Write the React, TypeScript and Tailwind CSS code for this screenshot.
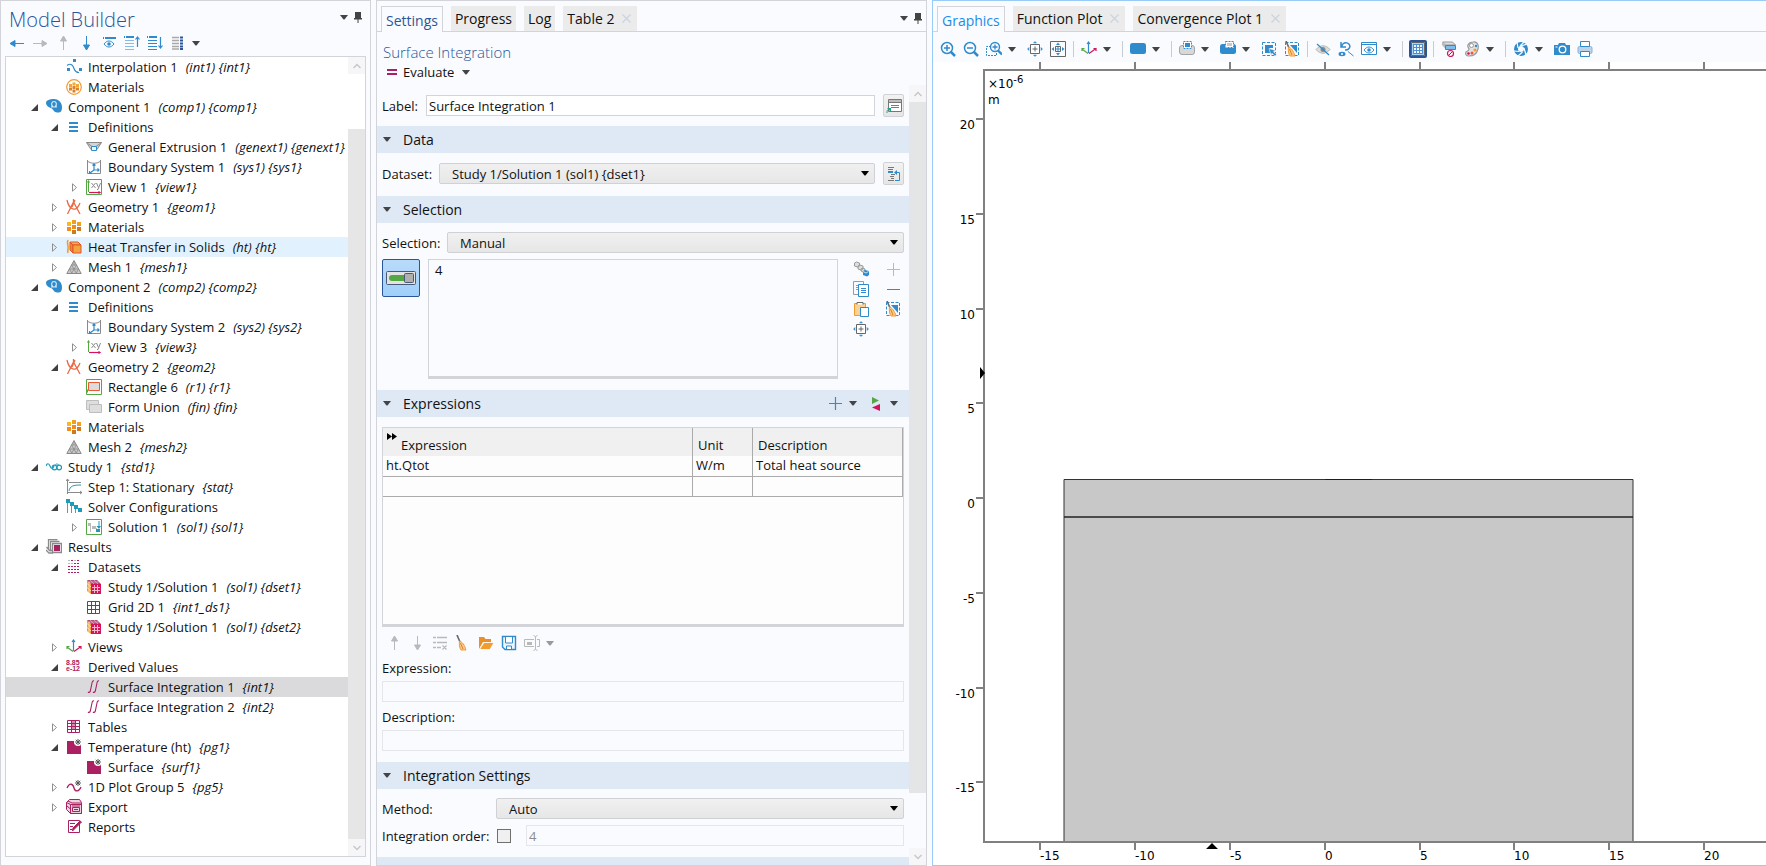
import type { ReactNode } from "react";

const BLUE = "#308bcc";
const GRAY = "#8a8a8a";
const PALE = "#b9b9b9";
const PLUM = "#ab2063";
const ORANGE = "#f29b30";
const GREEN = "#54a844";
const TEAL = "#1e9bb8";

function Svg({ children, size = 16 }: { children: ReactNode; size?: number }) {
  return (
    <svg width={size} height={size} viewBox={`0 0 ${size} ${size}`} fill="none" className="shrink-0" aria-hidden="true">
      {children}
    </svg>
  );
}

/* ---------- tree icons ---------- */

function MaterialBlocks() {
  return (
    <Svg>
      <g shapeRendering="crispEdges">
        <path d="M1 3h4v4H1z" fill="#fbb81f" />
        <path d="M6 1h4v4H6zM11 3h4v4h-4z" fill="#f0a020" />
        <path d="M1 8h4v4H1zM6 6h4v4H6z" fill="#f58a1f" />
        <path d="M11 8h4v4h-4zM6 11h4v4H6z" fill="#cf7a1c" />
      </g>
    </Svg>
  );
}

function BoundarySystem() {
  return (
    <Svg>
      <path d="M1.500 1v13.500h13V1" stroke={GRAY} />
      <path d="M1.500 2c3 3 10 3 13 0" stroke={GRAY} />
      <path d="M8 5v6h5M8 11l-4 3M6.500 6.500L8 5l1.500 1.500M11.500 9.500L13 11l-1.500 1.500M3.500 12v2.500H6" stroke={BLUE} strokeWidth="1.200" />
    </Svg>
  );
}

function ViewAxes({ framed = false }: { framed?: boolean }) {
  return (
    <Svg>
      {framed && <path d="M.5.5h15v15H.5z" stroke={GREEN} />}
      <path d="M2.500 2v11" stroke={GREEN} />
      <path d="M1.500 3.500l1-2 1 2" stroke={GREEN} />
      <path d="M3 13.500h11" stroke="#d4145a" strokeWidth="1.200" />
      <path d="M12.500 12.500l2 1-2 1" stroke="#d4145a" />
      <path d="M5.500 4l4 5M9.500 4l-4 5M10.500 4l2 4.500M14.500 4L12 10.500h-1" stroke={GRAY} />
    </Svg>
  );
}

function DatasetCube() {
  return (
    <Svg>
      <path d="M1 1l4 4v10l-4-3z" fill={ORANGE} />
      <path d="M1 1h10l4 4H5z" fill="#b04a78" />
      <path d="M5 5h10v10H5z" fill="#d4145a" />
      <path d="M8.500 6v8M11.500 6v8M6 8.500h8M6 11.500h8" stroke="#f3b6cb" />
      <path d="M3 3v10.500M1 4.500l4 3.500M1 8.500l4 3.500" stroke="#ffdca8" />
      <path d="M4 1l4 4M8 1l4 4M3 3h10" stroke="#e4b4cb" strokeWidth=".7" />
    </Svg>
  );
}

function Star({ x, y }: { x: number; y: number }) {
  return (
    <g transform={`translate(${x} ${y})`}>
      <circle r="4" fill="#fff" />
      <path d="M0-3v6M-3 0h6M-2.200-2.200l4.400 4.400M2.200-2.200l-4.400 4.400" stroke="#555" strokeWidth="1" />
    </g>
  );
}

const icons: Record<string, ReactNode> = {
  interpolation: (
    <Svg>
      <path d="M1 6.500c4-3 6 0 7 3s3 4 5 4" stroke={BLUE} strokeWidth="1.200" />
      <path d="M7 0h3v3H7zM1 9h3v3H1zM13 9h3v3h-3z" fill={BLUE} />
    </Svg>
  ),
  globalMaterials: (
    <Svg>
      <circle cx="8" cy="8" r="7.300" stroke={ORANGE} strokeWidth="1.200" />
      <path d="M3 5h3v3H3zM6.500 3.500h3v3h-3zM10 5h3v3h-3z" fill="#f0a733" />
      <path d="M3 8.500h3v3H3zM6.500 7h3v3h-3zM10 8.500h3v3h-3zM6.500 10.500h3v3h-3z" fill="#d9822b" />
    </Svg>
  ),
  component: (
    <Svg>
      <path d="M0 4C0 1 4 0 8 0s8 3 8 8-2 6-5 5.500C8 13 7.500 11 6 9.500 4 9 0 7 0 4z" fill={BLUE} />
      <path d="M5 8h2.200C4.500 6 5.500 2.500 8 2.500s3.500 3.500.8 5.500H11" stroke="#d3e8f7" strokeWidth="1.200" />
    </Svg>
  ),
  definitions: (
    <Svg>
      <path d="M3 3h9v2H3zM3 7h9v2H3zM3 11h9v2H3z" fill={BLUE} shapeRendering="crispEdges" />
    </Svg>
  ),
  extrusion: (
    <Svg>
      <path d="M.5 3.500h15l-4.500 7H5z" fill="#d5d5d5" stroke={GRAY} />
      <path d="M.5 3.500L6 7.500M15.500 3.500L10 7.500" stroke={GRAY} />
      <path d="M5.500 7.500h5v4h-5z" fill="#eaf5fc" stroke={BLUE} />
    </Svg>
  ),
  boundary: <BoundarySystem />,
  viewActive: <ViewAxes framed />,
  view: <ViewAxes />,
  geometry: (
    <Svg>
      <path d="M7.500 0v3L1.500 15M7.500 3l6.500 12M9 1L6 8" stroke="#ea6a44" strokeWidth="1.300" />
      <path d="M1 1c1 5 3 8 6 9s5-1 7-6" stroke="#ea6a44" strokeWidth="1.300" />
    </Svg>
  ),
  materials: <MaterialBlocks />,
  heat: (
    <Svg>
      <path d="M2 1c-2 4 1 5 0 9-.5 2-.5 3 0 4" stroke={ORANGE} strokeWidth="1.600" />
      <path d="M4 3l3 3v8l-3-3z" fill="#e88a2f" stroke="#e0562b" />
      <path d="M4 3h8l3 3H7z" fill="#f7b24d" stroke="#e0562b" />
      <path d="M7 6h8v8H7z" fill="#f5a340" stroke="#e0562b" />
    </Svg>
  ),
  mesh: (
    <Svg>
      <path d="M8 1.500l7.200 13H.8z" fill="#c9c9c9" stroke={GRAY} />
      <path d="M5.500 6h5M3.500 10h9M5.500 6l5 8.500M10.500 6l-5 8.500M3.500 10L6 14.500M12.500 10L10 14.500M8 2v4" stroke={GRAY} strokeWidth=".8" />
    </Svg>
  ),
  rectangle: (
    <Svg>
      <path d="M.5.500h15v15H.5z" stroke={GREEN} />
      <path d="M2.500 3.500h11v8h-11z" fill="#dcdcdc" stroke="#ea5a34" />
      <path d="M1.500 10.500v3" stroke="#ea5a34" />
    </Svg>
  ),
  union: (
    <Svg>
      <path d="M.5 1.500h12v9H.5z" fill="#dedede" stroke="#bdbdbd" />
      <path d="M3.500 5.500h12v8h-12z" fill="#dedede" stroke="#bdbdbd" />
    </Svg>
  ),
  study: (
    <Svg>
      <path d="M0 7c1-3 3-3 4 0s3 3 4 0" stroke={TEAL} strokeWidth="1.200" />
      <circle cx="8.500" cy="8.500" r="2.300" stroke={TEAL} strokeWidth="1.200" />
      <circle cx="13.200" cy="8.500" r="2.300" stroke={TEAL} strokeWidth="1.200" />
      <path d="M9 6.500c1-2 3-2 4 0" stroke={TEAL} />
    </Svg>
  ),
  step: (
    <Svg>
      <path d="M1.500 0v15M1 13.500h15M0 2l1.500-2L3 2M14 12l2 1.500-2 1.500M3 3.500h12" stroke={GRAY} />
      <path d="M3 12c1-5 4-6 12-6" stroke={TEAL} />
    </Svg>
  ),
  solver: (
    <Svg>
      <path d="M1.500 3v11M5.500 6v8M9.500 8v6" stroke={GRAY} />
      <path d="M0 0h4v4H0zM4 3h4v4H4zM8 6h4v4H8zM12 9h4v4h-4z" fill={TEAL} shapeRendering="crispEdges" />
    </Svg>
  ),
  solution: (
    <Svg>
      <path d="M.5.500h15v15H.5z" stroke={GREEN} />
      <path d="M2 4h3v3H2zM6 7h4v3H6z" fill={PALE} />
      <path d="M4.500 7v6M10.500 9v4" stroke={PALE} />
      <path d="M10 10h4v3h-4zM13.500 2h-1v5h-2l2.500 3 2-3h-1.500z" fill={TEAL} />
    </Svg>
  ),
  results: (
    <Svg>
      <path d="M2.500 10V.5h9M0 11l3 3h4M4.500 12.500v-10h9M.5 8l3 3.500h3" stroke={GRAY} strokeWidth="1.300" />
      <path d="M6.500 4.500h9v9h-9z" fill="#eee" stroke={GRAY} strokeWidth="1.300" />
      <path d="M8 6h6v6H8z" fill={PLUM} />
    </Svg>
  ),
  datasets: (
    <Svg>
      <path d="M2 1.500h11M2 4.500h11" stroke={PALE} strokeDasharray="2 1" />
      <path d="M2 7.500h11M2 10.500h11M2 13.500h11" stroke={PLUM} strokeDasharray="2 1" />
      <path d="M5 1.500h2M11 1.500h2M8 4.500h5" stroke={PLUM} strokeDasharray="2 1" />
    </Svg>
  ),
  cube: <DatasetCube />,
  grid2d: (
    <Svg>
      <path d="M1.500 2.500h12v12h-12zM5.500 2v12M9.500 2v12M1 6.500h12M1 10.500h12" stroke={PLUM} />
    </Svg>
  ),
  views: (
    <Svg>
      <path d="M7.500 12V1M6 3l1.500-2L9 3" stroke={BLUE} strokeWidth="1.200" />
      <path d="M7 12.500L1 8M1 10V7.500h2.500" stroke={GREEN} strokeWidth="1.200" />
      <path d="M8 12.500l7-5M12.500 7.500H15V10" stroke="#d4145a" strokeWidth="1.200" />
    </Svg>
  ),
  derived: (
    <Svg>
      <g fill={PLUM} fontSize="7" fontWeight="700" fontFamily="Liberation Sans, sans-serif">
        <text x="0" y="6">
          8.85
        </text>
        <text x="0" y="12">
          e-12
        </text>
      </g>
    </Svg>
  ),
  integral: (
    <Svg>
      <path
        d="M2 13c1 1 2 0 2.300-1L6 4c.4-2 1-2.500 2-2M7 13c1 1 2 0 2.300-1L11 4c.4-2 1-2.500 2-2"
        stroke={PLUM}
        strokeWidth="1.100"
      />
    </Svg>
  ),
  tables: (
    <Svg>
      <path d="M5 2h5v8H5z" fill="#d08fb0" />
      <path d="M1.500 1.500h12v12h-12zM5.500 1v13M9.500 1v13M1 4.500h13M1 7.500h13M1 10.500h13" stroke={PLUM} />
    </Svg>
  ),
  plot2d: (
    <Svg>
      <path d="M1 2h14v13H1z" fill={PLUM} />
      <Star x={12} y={3} />
    </Svg>
  ),
  plot1d: (
    <Svg>
      <path d="M1 9c3-6 6-4 7 0s5 4 7-1" stroke={PLUM} strokeWidth="1.300" />
      <Star x={12} y={4} />
    </Svg>
  ),
  exporter: (
    <Svg>
      <path d="M.5 3.500l3-3h10l2 3v11h-11l-4-4z" fill="#f0d3e0" stroke={PLUM} />
      <path d="M4.500 5.500h11v9h-11zM.5 3.500l4 2M2 2l4 2h9M1 7l3.500 3" stroke={PLUM} />
      <path d="M6.500 8.500h7v4h-7zM6 7h8" stroke={PLUM} />
      <path d="M8 10.500h4" stroke={PLUM} />
    </Svg>
  ),
  reports: (
    <Svg>
      <path d="M2.500 1.500h11v12h-11z" stroke={PLUM} />
      <path d="M4 4.500h5M4 7.500h3M4 10.500h2" stroke={PLUM} />
      <path d="M15.500 3l-7 7-2 2 .5-3 7-7z" fill={PLUM} stroke={PLUM} />
    </Svg>
  ),
};

/* ---------- tree data ---------- */

type Node = {
  level: 1 | 2 | 3;
  icon: string;
  name: string;
  tag?: string;
  open?: boolean;
  state?: "hover" | "selected";
};

const nodes: Node[] = [
  { level: 2, icon: "interpolation", name: "Interpolation 1", tag: "(int1) {int1}" },
  { level: 2, icon: "globalMaterials", name: "Materials" },
  { level: 1, icon: "component", name: "Component 1", tag: "(comp1) {comp1}", open: true },
  { level: 2, icon: "definitions", name: "Definitions", open: true },
  { level: 3, icon: "extrusion", name: "General Extrusion 1", tag: "(genext1) {genext1}" },
  { level: 3, icon: "boundary", name: "Boundary System 1", tag: "(sys1) {sys1}" },
  { level: 3, icon: "viewActive", name: "View 1", tag: "{view1}", open: false },
  { level: 2, icon: "geometry", name: "Geometry 1", tag: "{geom1}", open: false },
  { level: 2, icon: "materials", name: "Materials", open: false },
  { level: 2, icon: "heat", name: "Heat Transfer in Solids", tag: "(ht) {ht}", open: false, state: "hover" },
  { level: 2, icon: "mesh", name: "Mesh 1", tag: "{mesh1}", open: false },
  { level: 1, icon: "component", name: "Component 2", tag: "(comp2) {comp2}", open: true },
  { level: 2, icon: "definitions", name: "Definitions", open: true },
  { level: 3, icon: "boundary", name: "Boundary System 2", tag: "(sys2) {sys2}" },
  { level: 3, icon: "view", name: "View 3", tag: "{view3}", open: false },
  { level: 2, icon: "geometry", name: "Geometry 2", tag: "{geom2}", open: true },
  { level: 3, icon: "rectangle", name: "Rectangle 6", tag: "(r1) {r1}" },
  { level: 3, icon: "union", name: "Form Union", tag: "(fin) {fin}" },
  { level: 2, icon: "materials", name: "Materials" },
  { level: 2, icon: "mesh", name: "Mesh 2", tag: "{mesh2}" },
  { level: 1, icon: "study", name: "Study 1", tag: "{std1}", open: true },
  { level: 2, icon: "step", name: "Step 1: Stationary", tag: "{stat}" },
  { level: 2, icon: "solver", name: "Solver Configurations", open: true },
  { level: 3, icon: "solution", name: "Solution 1", tag: "(sol1) {sol1}", open: false },
  { level: 1, icon: "results", name: "Results", open: true },
  { level: 2, icon: "datasets", name: "Datasets", open: true },
  { level: 3, icon: "cube", name: "Study 1/Solution 1", tag: "(sol1) {dset1}" },
  { level: 3, icon: "grid2d", name: "Grid 2D 1", tag: "{int1_ds1}" },
  { level: 3, icon: "cube", name: "Study 1/Solution 1", tag: "(sol1) {dset2}" },
  { level: 2, icon: "views", name: "Views", open: false },
  { level: 2, icon: "derived", name: "Derived Values", open: true },
  { level: 3, icon: "integral", name: "Surface Integration 1", tag: "{int1}", state: "selected" },
  { level: 3, icon: "integral", name: "Surface Integration 2", tag: "{int2}" },
  { level: 2, icon: "tables", name: "Tables", open: false },
  { level: 2, icon: "plot2d", name: "Temperature (ht)", tag: "{pg1}", open: true },
  { level: 3, icon: "plot2d", name: "Surface", tag: "{surf1}" },
  { level: 2, icon: "plot1d", name: "1D Plot Group 5", tag: "{pg5}", open: false },
  { level: 2, icon: "exporter", name: "Export", open: false },
  { level: 2, icon: "reports", name: "Reports" },
];

const indent = { 1: "pl-5", 2: "pl-10", 3: "pl-15" };
const rowState = { hover: "bg-[#e2f1fe]", selected: "bg-[#dadadc]" };

/* ---------- shared pieces ---------- */

function Caret({ color = "#444", label }: { color?: string; label?: string }) {
  const mark = (
    <svg width="8" height="5" viewBox="0 0 8 5" className="shrink-0" aria-hidden="true">
      <path d="M0 0h8L4.500 4.500h-1z" fill={color} />
    </svg>
  );
  if (!label) return mark;
  return (
    <button type="button" aria-label={label} className="flex h-6 w-[18px] items-center justify-center pr-1">
      {mark}
    </button>
  );
}

function Tool({ label, children }: { label: string; children: ReactNode }) {
  return (
    <button type="button" aria-label={label} className="flex h-6 w-[23px] shrink-0 items-center justify-center">
      {children}
    </button>
  );
}

function Separator() {
  return (
    <span className="flex h-4 w-2 shrink-0 justify-center">
      <span className="w-px bg-[#c9cbd0]" />
    </span>
  );
}

function Pin() {
  return (
    <svg width="8" height="11" viewBox="0 0 8 11" aria-hidden="true">
      <path d="M1 0h6v6h1v1.500H4.500V11h-1V7.500H0V6h1z" fill="#444" />
    </svg>
  );
}

function WindowControls() {
  return (
    <div className="flex items-center gap-1.5 pr-1">
      <button type="button" aria-label="Window menu">
        <Caret />
      </button>
      <button type="button" aria-label="Pin window">
        <Pin />
      </button>
    </div>
  );
}

function ScrollArrow({ down }: { down?: boolean }) {
  return (
    <button
      type="button"
      aria-label={down ? "Scroll down" : "Scroll up"}
      className="flex h-[17px] shrink-0 items-center justify-center bg-[#f6f6f8]"
    >
      <svg width="8" height="6" viewBox="0 0 8 6" fill="none" aria-hidden="true">
        <path d={down ? "M.5 1L4 4.500 7.500 1" : "M.5 5L4 1.500 7.500 5"} stroke="#c6c8cb" strokeWidth="1.500" />
      </svg>
    </button>
  );
}

function Tab({ name, active, closable, accent }: { name: string; active?: boolean; closable?: boolean; accent?: string }) {
  if (active) {
    return (
      <button
        type="button"
        role="tab"
        aria-selected="true"
        className={`-mb-px h-[26px] border border-b-0 border-[#d2d4d9] bg-[#fafbff] px-1 pt-0.5 ${accent}`}
      >
        {name}
      </button>
    );
  }
  return (
    <div role="tab" aria-selected="false" className="flex h-[25px] items-center bg-[#ebebeb] px-1">
      <button type="button">{name}</button>
      {closable && (
        <button type="button" aria-label={`Close ${name}`} className="mr-0.5 ml-2">
          <svg width="9" height="9" viewBox="0 0 9 9" fill="none" aria-hidden="true">
            <path d="M.5.5l8 8M8.500.5l-8 8" stroke="#ccd3e0" strokeWidth="1.200" />
          </svg>
        </button>
      )}
    </div>
  );
}

function Section({ title, children }: { title: string; children?: ReactNode }) {
  return (
    <div className="flex h-[27px] shrink-0 items-center bg-[#dfe8f5] pl-1.5">
      <Caret />
      <h3 className="ml-3 flex-1 text-sm">{title}</h3>
      {children}
    </div>
  );
}

function Dropdown({ id, value }: { id: string; value: string }) {
  return (
    <div className="relative min-w-0 flex-1">
      <select
        id={id}
        defaultValue={value}
        className="block h-[21px] w-full appearance-none rounded-[2px] border border-[#cfd1d4] bg-linear-to-b from-[#f0f0f0] to-[#e7e7e7] pl-3 leading-[18px]"
      >
        <option>{value}</option>
      </select>
      <span className="pointer-events-none absolute inset-y-0 right-1.5 flex items-center">
        <Caret color="#000" />
      </span>
    </div>
  );
}

/* ---------- toolbar drawings ---------- */

function Arrow({ dir, color }: { dir: "left" | "right" | "up" | "down"; color: string }) {
  const d = {
    left: "M15 8.500H5M1 8.500l5-3v6z",
    right: "M1 8.500h10M15 8.500l-5-3v6z",
    up: "M8.500 15V5M8.500 1l-3 5h6z",
    down: "M8.500 1v10M8.500 15l-3-5h6z",
  }[dir];
  return (
    <Svg>
      <path d={d} stroke={color} fill={color} strokeWidth="1" strokeLinejoin="bevel" />
    </Svg>
  );
}

function Lines({ arrow }: { arrow: "up" | "down" }) {
  return (
    <Svg>
      <path d="M0 1h1v2H0zM2 1h8v2H2z" fill={BLUE} />
      <path d="M1 5.500h9M1 8.500h9M1 11.500h9M1 14.500h9" stroke={arrow === "up" ? "#83bce5" : BLUE} />
      <path
        d={arrow === "up" ? "M13.500 12V2M11.500 4.500l2-2.500 2 2.500" : "M13.500 2v11M11.500 10.500l2 2.500 2-2.500"}
        stroke={BLUE}
        strokeWidth="1.200"
      />
    </Svg>
  );
}

function Broom() {
  return (
    <>
      <path d="M2 0l3 7" stroke="#666" strokeWidth="1.600" />
      <path d="M4.500 6c3 1 5 4 6.500 9H6C4.500 13 4 9 4.500 6z" fill="#fbc984" stroke={ORANGE} />
      <path d="M5.500 8l2.500 6" stroke="#d9822b" />
    </>
  );
}

function SelectBroom() {
  return (
    <Svg>
      <path d="M1.500 1.500h13v13h-13z" stroke={BLUE} strokeDasharray="3 1.500" />
      <path d="M6 4h7v8z" fill={BLUE} />
      <Broom />
    </Svg>
  );
}

function Extents() {
  return (
    <Svg>
      <path d="M3.500 3.500h9v9h-9z" fill="#fff" stroke="#666" />
      <path d="M8 5.500v5M5.500 8h5" stroke="#666" />
      <path d="M6.500 2h3L8 .5zM6.500 14h3L8 15.500zM2 6.500v3L.5 8zM14 6.500v3L15.500 8z" fill={BLUE} stroke={BLUE} strokeWidth=".5" />
    </Svg>
  );
}

function Magnifier({ sign }: { sign: "plus" | "minus" }) {
  return (
    <Svg>
      <circle cx="7" cy="7" r="5.500" stroke={BLUE} strokeWidth="1.500" />
      <path d="M10.500 10.500l4.500 4.500" stroke={BLUE} strokeWidth="2.500" />
      <path d={sign === "plus" ? "M7 4v6M4 7h6" : "M4 7h6"} stroke={BLUE} strokeWidth="1.500" />
    </Svg>
  );
}

function Eye({ color = BLUE }: { color?: string }) {
  return (
    <>
      <path d="M3 9c3-4 7-4 10 0-3 4-7 4-10 0z" stroke={color} />
      <circle cx="8" cy="9" r="1.800" fill={color} />
    </>
  );
}

/* ---------- panels ---------- */

function ModelBuilder() {
  return (
    <aside className="flex w-[371px] shrink-0 flex-col border border-[#d2d4d9] px-1 pb-2">
      <div className="flex h-8 items-center justify-between">
        <h1 className="pl-1 pt-1.5 text-[20px] leading-6 font-light text-[#2a5699]">Model Builder</h1>
        <WindowControls />
      </div>
      <div className="mb-[3px] flex h-5 items-center">
        <Tool label="Previous node"><Arrow dir="left" color={BLUE} /></Tool>
        <Tool label="Next node"><Arrow dir="right" color={PALE} /></Tool>
        <Tool label="Move up"><Arrow dir="up" color={PALE} /></Tool>
        <Tool label="Move down"><Arrow dir="down" color={BLUE} /></Tool>
        <Tool label="Show more options">
          <Svg>
            <path d="M2 2h1v2H2zM4 2h11v2H4z" fill={BLUE} />
            <Eye />
          </Svg>
        </Tool>
        <Tool label="Collapse all"><Lines arrow="up" /></Tool>
        <Tool label="Expand all"><Lines arrow="down" /></Tool>
        <Tool label="Node text">
          <Svg>
            <path d="M2 2.500h7M2 5.500h7M2 8.500h7M2 11.500h7M2 14h7" stroke="#a9a9a9" strokeWidth="1.500" />
            <path d="M10 2.500h3M10 5.500h3M10 8.500h3M10 11.500h3M10 14h3" stroke="#2a5699" strokeWidth="1.800" />
          </Svg>
        </Tool>
        <Caret label="Node text menu" />
      </div>
      <div className="flex min-h-0 flex-1 overflow-hidden border border-[#d2d4d9] bg-white">
        <ul className="min-w-0 flex-1">
          {nodes.map((n, i) => (
            <li
              key={i}
              className={`flex h-5 items-center whitespace-nowrap ${indent[n.level]} ${n.state ? rowState[n.state] : ""}`}
            >
              <span className="flex w-5 shrink-0 pl-[5px]">
                {n.open === true && (
                  <svg width="7" height="7" viewBox="0 0 7 7" aria-hidden="true">
                    <path d="M7 0v7H0z" fill="#404040" />
                  </svg>
                )}
                {n.open === false && (
                  <svg width="7" height="9" viewBox="0 0 7 9" fill="none" aria-hidden="true">
                    <path d="M1.500.8v7.400l4-3.700z" stroke="#8f8f8f" />
                  </svg>
                )}
              </span>
              {icons[n.icon]}
              <span className="ml-1.5">{n.name}</span>
              {n.tag && <i className="ml-2">{n.tag}</i>}
            </li>
          ))}
        </ul>
        <div className="flex w-[17px] shrink-0 flex-col">
          <ScrollArrow />
          <div className="h-[55px]" />
          <div className="flex-1 bg-[#e6e6e6]" />
          <ScrollArrow down />
        </div>
      </div>
    </aside>
  );
}

function SettingsToolbar() {
  return (
    <div className="flex h-8 items-center">
      <Tool label="Move row up"><Arrow dir="up" color={PALE} /></Tool>
      <Tool label="Move row down"><Arrow dir="down" color={PALE} /></Tool>
      <Tool label="Delete row">
        <Svg>
          <path d="M1 2.500h3M5 2.500h10M1 7.500h3M5 7.500h10M1 12.500h3M5 12.500h4M10.500 10.500l4 4M14.500 10.500l-4 4" stroke={PALE} strokeWidth="1.300" />
        </Svg>
      </Tool>
      <Tool label="Clear table"><Svg><Broom /></Svg></Tool>
      <Tool label="Load from file">
        <Svg>
          <path d="M1 14V2h5l1.500 2H13v3H5z" fill="#e8912a" />
          <path d="M1.500 14.500L6 7.500h10l-4 7z" fill={ORANGE} stroke="#fff" strokeWidth=".8" />
        </Svg>
      </Tool>
      <Tool label="Save to file">
        <Svg>
          <path d="M1.500 1.500h13v13H4l-2.500-2.500z" fill="#eef6fc" stroke={BLUE} strokeWidth="1.400" />
          <path d="M4.500 2v6h7V2M5.500 14v-3h5v3" fill="#fff" stroke={BLUE} />
        </Svg>
      </Tool>
      <Tool label="Edit expression">
        <Svg>
          <path d="M10 4.500H.5v7H10M13 4.500h2.500v7H13M11.500 1.500v13M9.500.5l2 1 2-1M9.500 15.500l2-1 2 1" stroke={PALE} />
          <path d="M3 7h5v3H3z" fill={PALE} />
        </Svg>
      </Tool>
      <Caret color="#999" label="Edit expression menu" />
    </div>
  );
}

function Settings() {
  const field = "border border-[#d2d4d9] bg-white px-0.5";
  const sideButton =
    "ml-2 flex h-[23px] w-[21px] shrink-0 items-center justify-center rounded-[2px] border border-[#cfd1d4] bg-linear-to-b from-[#f2f2f2] to-[#e6e6e6]";
  return (
    <section className="flex w-[551px] shrink-0 flex-col border border-[#d2d4d9]">
      <div className="flex h-[31px] shrink-0 items-start justify-between border-b border-[#d2d4d9] pl-1 text-sm">
        <div role="tablist" className="flex gap-2 pt-[5px]">
          <Tab name="Settings" active accent="text-[#2a5699]" />
          <Tab name="Progress" />
          <Tab name="Log" />
          <Tab name="Table 2" closable />
        </div>
        <div className="pt-3">
          <WindowControls />
        </div>
      </div>
      <div className="px-1.5 pt-2.5 pb-[3px]">
        <h2 className="text-[15px] leading-5 font-light text-[#2a5699]">Surface Integration</h2>
        <button type="button" className="flex h-5 items-center pl-1">
          <svg width="10" height="6" viewBox="0 0 10 6" aria-hidden="true">
            <path d="M0 0h10v2H0zM0 4h10v2H0z" fill={PLUM} />
          </svg>
          <span className="mr-2 ml-1.5">Evaluate</span>
          <Caret />
        </button>
      </div>

      <div className="flex min-h-0 flex-1">
        <form className="flex min-w-0 flex-1 flex-col overflow-hidden">
          <div className="flex shrink-0 items-center px-[5px] py-[9px]">
            <label htmlFor="label" className="w-11">Label:</label>
            <input id="label" defaultValue="Surface Integration 1" className={`h-[21px] min-w-0 flex-1 ${field}`} />
            <button type="button" aria-label="Go to node" className={sideButton}>
              <Svg>
                <path d="M2.500 1.500h13v12h-13z" fill="#fff" stroke="#777" />
                <path d="M3 2h12v2.500H3z" fill="#bdbdbd" />
                <path d="M2 4.500h13" stroke="#777" />
                <path d="M5 7.500h8M5 9.500h8M1 15c0-2 0-3 2-4" stroke="#1fa688" />
                <path d="M1 10h4v4z" fill="#1fa688" />
              </Svg>
            </button>
          </div>

          <Section title="Data" />
          <div className="flex shrink-0 items-center px-[5px] pt-[9px] pb-[11px]">
            <label htmlFor="dataset" className="w-[57px]">Dataset:</label>
            <Dropdown id="dataset" value="Study 1/Solution 1 (sol1) {dset1}" />
            <button type="button" aria-label="Go to source" className={sideButton}>
              <Svg>
                <path d="M2 1.500h6M2 3.500h5M5 8.500h4M4 10.500h4M5 12.500h3M2 14.500h6" stroke="#777" />
                <path d="M2 5h5v2H2zM8 6.500l3-2.500v5z" fill={BLUE} />
                <path d="M10 6.500h3.500v8H9" stroke={BLUE} />
              </Svg>
            </button>
          </div>

          <Section title="Selection" />
          <div className="flex shrink-0 flex-col gap-1.5 px-[5px] pt-[9px] pb-[11px]">
            <div className="flex items-center">
              <label htmlFor="selection" className="w-[65px]">Selection:</label>
              <Dropdown id="selection" value="Manual" />
            </div>
            <div className="flex">
              <button
                type="button"
                aria-label="Active"
                aria-pressed="true"
                className="flex h-[38px] w-[38px] shrink-0 items-center justify-center rounded-[2px] border border-[#2a5699] bg-linear-to-b from-[#b9dbfa] to-[#9fd0f9]"
              >
                <svg width="30" height="14" viewBox="0 0 30 14" aria-hidden="true">
                  <rect x=".5" y=".5" width="29" height="13" rx="1" fill="#e3e3e3" stroke="#4a5a75" />
                  <path d="M6 4h12v6H6a3 3 0 010-6z" fill={GREEN} />
                  <rect x="18.500" y="2.500" width="9" height="9" rx="1" fill="#b0b0b0" stroke="#4a5a75" />
                </svg>
              </button>
              <ul aria-label="Selected domains" className="ml-2 h-[120px] min-w-0 flex-1 border border-b-3 border-[#d2d4d9] px-1.5">
                <li>4</li>
              </ul>
              <div className="mr-[3px] ml-[15px] grid h-20 grid-cols-[16px_16px] grid-rows-4 items-center justify-items-center gap-x-4">
                <button type="button" aria-label="Create selection">
                  <Svg>
                    <path d="M1.500 2l2-1 3 1v3l-2 1-3-1zM5 5l2-1 3 1v3L8 9 5 8zM8 8l2-1 2 1v3h-2l-2-1z" fill="#ddd" stroke="#9a9a9a" />
                    <path d="M10 10l2-1 4 1v4l-2 1.500L10 14z" fill={BLUE} />
                    <path d="M10 10.500l3 1.500 2.500-1.500" stroke="#bfe0f7" />
                  </Svg>
                </button>
                <button type="button" aria-label="Add to selection">
                  <Svg><path d="M8.500 2v13M2 8.500h13" stroke={PALE} /></Svg>
                </button>
                <button type="button" aria-label="Copy selection">
                  <Svg>
                    <path d="M.5.500h10v13H.5z" fill="#fafbff" stroke="#9a9a9a" />
                    <path d="M3 4.500h3M3 6.500h2M3 8.500h2" stroke="#9a9a9a" />
                    <path d="M5.500 3.500h10v12h-10z" fill="#fff" stroke={BLUE} />
                    <path d="M8 7.500h5M8 9.500h5M8 11.500h5" stroke={BLUE} />
                  </Svg>
                </button>
                <button type="button" aria-label="Remove from selection">
                  <Svg><path d="M2 8.500h13" stroke={BLUE} /></Svg>
                </button>
                <button type="button" aria-label="Paste selection">
                  <Svg>
                    <path d="M1.500 2.500h11v12h-11z" fill="#fbd291" stroke={ORANGE} />
                    <path d="M4 3.500V1.500h6v2" fill="#fff" stroke="#666" />
                    <path d="M7.500 6.500h8v9h-8z" fill="#fff" stroke={BLUE} />
                  </Svg>
                </button>
                <button type="button" aria-label="Clear selection"><SelectBroom /></button>
                <button type="button" aria-label="Zoom to selection"><Extents /></button>
              </div>
            </div>
          </div>

          <Section title="Expressions">
            <Tool label="Add expression">
              <Svg><path d="M8.500 1v13M2 7.500h13" stroke={BLUE} strokeWidth="1.200" /></Svg>
            </Tool>
            <Caret label="Add expression menu" />
            <Tool label="Replace expression">
              <Svg><path d="M4 1v7l7-3.500z" fill={GREEN} /><path d="M12 8v7L4 11.500z" fill="#d4145a" /></Svg>
            </Tool>
            <span className="pr-1"><Caret label="Replace expression menu" /></span>
          </Section>
          <div className="flex shrink-0 flex-col px-[5px] pt-2.5 pb-[11px]">
            <div className="h-[200px] border border-b-3 border-[#d2d4d9] bg-[#fdfdfe]">
              <table className="w-full table-fixed border-collapse text-left [&_td]:border [&_td]:border-l-0 [&_td]:border-[#ababab] [&_td]:px-[3px] [&_th]:border-r [&_th]:border-[#ababab] [&_th]:font-normal">
                <colgroup>
                  <col />
                  <col className="w-[60px]" />
                  <col className="w-[150px]" />
                </colgroup>
                <thead>
                  <tr className="h-7 bg-[#f0f0f0]">
                    <th className="pt-1.5 pl-1">
                      <span className="flex items-start">
                        <svg width="10" height="7" viewBox="0 0 10 7" className="-mt-0.5 mr-1 shrink-0" aria-hidden="true">
                          <path d="M0 0l5 3.500L0 7zM5 0l5 3.500L5 7z" fill="#000" />
                        </svg>
                        <span>Expression</span>
                      </span>
                    </th>
                    <th className="pt-1.5 pl-[5px]">Unit</th>
                    <th className="pt-1.5 pl-[5px]">Description</th>
                  </tr>
                </thead>
                <tbody>
                  <tr className="h-5 leading-[19px]">
                    <td className="border-t-0!">ht.Qtot</td>
                    <td className="border-t-0!">W/m</td>
                    <td className="border-t-0!">Total heat source</td>
                  </tr>
                  <tr className="h-5">
                    <td />
                    <td />
                    <td />
                  </tr>
                </tbody>
              </table>
            </div>
            <SettingsToolbar />
            <label htmlFor="expression" className="leading-[18px]">Expression:</label>
            <input id="expression" disabled className="mt-1 mb-1.5 h-[21px] border border-[#e4e6ea] bg-transparent px-0.5" />
            <label htmlFor="description" className="leading-[18px]">Description:</label>
            <input id="description" disabled className="mt-1 h-[21px] border border-[#e4e6ea] bg-transparent px-0.5" />
          </div>

          <Section title="Integration Settings" />
          <div className="flex shrink-0 flex-col gap-1.5 px-[5px] pt-[9px] pb-[11px]">
            <div className="flex items-center">
              <label htmlFor="method" className="w-[114px]">Method:</label>
              <Dropdown id="method" value="Auto" />
            </div>
            <div className="flex items-center">
              <label htmlFor="order-on" className="w-[115px]">Integration order:</label>
              <input id="order-on" type="checkbox" className="h-3.5 w-3.5 appearance-none border border-[#6f6f6f] bg-[#f0f0f0]" />
              <input
                aria-label="Integration order value"
                disabled
                defaultValue="4"
                className="ml-[15px] h-[21px] min-w-0 flex-1 border border-[#e4e6ea] bg-transparent px-0.5 text-[#8c8c8c]"
              />
            </div>
          </div>
          <div className="flex-1 bg-[#dfe8f5]" />
        </form>
        <div className="flex w-[17px] shrink-0 flex-col">
          <ScrollArrow />
          <div className="flex-1 bg-[#e4e5e7]" />
          <div className="h-[55px]" />
          <ScrollArrow down />
        </div>
      </div>
    </section>
  );
}

function GraphicsToolbar() {
  return (
    <div className="flex h-[30px] shrink-0 items-center overflow-hidden pt-1 pl-[3px]">
      <Tool label="Zoom in"><Magnifier sign="plus" /></Tool>
      <Tool label="Zoom out"><Magnifier sign="minus" /></Tool>
      <Tool label="Zoom box">
        <Svg>
          <path d="M5 5.500H.5v9h10v-3" stroke={BLUE} strokeDasharray="2 1" />
          <circle cx="9" cy="6" r="4.500" fill="#fafbff" stroke={BLUE} strokeWidth="1.400" />
          <path d="M12 9.500l4 4" stroke={BLUE} strokeWidth="2.400" />
          <path d="M9 3.500v5M6.500 6h5" stroke={BLUE} strokeWidth="1.300" />
        </Svg>
      </Tool>
      <Caret label="Zoom menu" />
      <Tool label="Zoom selected"><Extents /></Tool>
      <Tool label="Zoom extents">
        <Svg>
          <path d="M.5.500h15v15H.5z" stroke="#666" />
          <path d="M5.500 5.500h5v5h-5z" stroke="#666" />
          <path d="M8 6v4M6 8h4" stroke={BLUE} />
          <path d="M6 4h4L8 1.500zM6 12h4l-2 2.500zM4 6v4L1.500 8zM12 6v4l2.500-2z" fill={BLUE} />
        </Svg>
      </Tool>
      <Separator />
      <Tool label="Go to view">{icons.views}</Tool>
      <Caret label="View menu" />
      <Separator />
      <Tool label="Select domains">
        <Svg><rect y="2" width="16" height="11" rx="2.500" fill={BLUE} /></Svg>
      </Tool>
      <Caret label="Selection level" />
      <Separator />
      <Tool label="Select objects">
        <Svg>
          <rect x=".5" y="4.500" width="15" height="9" rx="2.500" fill="#d8d8d8" stroke="#a5a5a5" />
          <path d="M4 0h9v8H4z" fill="#fff" />
          <path d="M4.500.5h8v7h-8z" stroke={BLUE} strokeDasharray="2 1" />
          <path d="M6 2h5v4H6z" fill={BLUE} />
        </Svg>
      </Tool>
      <Caret label="Object selection menu" />
      <Tool label="Deselect objects">
        <Svg>
          <rect y="3" width="16" height="10" rx="2.500" fill={BLUE} />
          <path d="M5 0h9v7H5z" fill="#fff" />
          <path d="M5.500.5h8v6h-8z" stroke={BLUE} strokeDasharray="2 1" />
          <path d="M7 2h5v3H7z" fill="#c9c9c9" />
        </Svg>
      </Tool>
      <Caret label="Deselection menu" />
      <Tool label="Select box">
        <Svg>
          <path d="M1.500 1.500h13v13h-13z" stroke={BLUE} strokeDasharray="3 1.500" />
          <path d="M4 4h8v3H9v5H4z" fill={BLUE} />
          <path d="M8 7.500l6.500 2-2 1.200 3 3-1.500 1.500-3-3-1 2z" fill={BLUE} stroke="#fafbff" strokeWidth=".6" />
        </Svg>
      </Tool>
      <Tool label="Deselect box"><SelectBroom /></Tool>
      <Separator />
      <Tool label="Hide selected">
        <Svg>
          <path d="M1 8.500c4-5 10-5 14 0-4 5-10 5-14 0z" fill="#dcdcdc" stroke={PALE} />
          <circle cx="8" cy="8.500" r="2.500" fill={GRAY} />
          <path d="M2 3l12 11" stroke={BLUE} strokeWidth="1.200" />
        </Svg>
      </Tool>
      <Tool label="Reset hiding">
        <Svg>
          <path d="M4 6a4 3.500 0 117 1.500C10 9 8 9 7 9M3 1v5h5" stroke={BLUE} strokeWidth="1.500" />
          <ellipse cx="4" cy="13" rx="3.500" ry="2.200" fill={BLUE} />
          <circle cx="4" cy="13" r="1" fill="#fff" />
          <path d="M10 10.500l5.500 4.500" stroke={BLUE} />
        </Svg>
      </Tool>
      <Tool label="View hidden">
        <Svg>
          <path d="M.5 1.500h15v12H.5z" fill="#fff" stroke={BLUE} />
          <path d="M1 3.500h14" stroke={BLUE} />
          <Eye />
        </Svg>
      </Tool>
      <Caret label="Hidden menu" />
      <Separator />
      <Tool label="Show grid">
        <svg width="18" height="18" viewBox="0 0 18 18" fill="none" aria-hidden="true">
          <rect x="1" y="1" width="16" height="16" rx="1" fill="#a9d3f5" stroke="#2a5699" strokeWidth="2" />
          <path d="M4 4h10v10H4z" fill="#eef5fb" />
          <path d="M2.500 2.500h13v13h-13z" stroke="#666" />
          <path d="M4.500 4v10M7.500 4v10M10.500 4v10M13.500 4v10M4 4.500h10M4 7.500h10M4 10.500h10M4 13.500h10" stroke="#4f8fcc" />
        </svg>
      </Tool>
      <Separator />
      <Tool label="Show legends">
        <Svg>
          <path d="M1.500 1h10l3 3h-10z" fill="#ddd" stroke="#999" />
          <path d="M1 1v3l3.500 4V4z" fill="#bbb" />
          <path d="M4.500 4.500h10v4h-10z" fill="#7cbdec" stroke={BLUE} />
          <circle cx="9.500" cy="12.500" r="3" fill="#fff" stroke="#d4145a" strokeWidth="1.200" />
          <path d="M7.500 14.500l4-4" stroke="#d4145a" />
        </Svg>
      </Tool>
      <Tool label="Color theme">
        <Svg>
          <path d="M9 1c4-1 6 3 5 7s-4 7-9 7c-3 0-4-2-3-4 1-1 3-1 3-3 0-1-2-2-1-4 1-2 3-3 5-3z" fill="#e2e2e2" stroke="#999" strokeWidth="1.200" />
          <circle cx="7.500" cy="4.500" r="2" fill="#fff" stroke="#999" />
          <circle cx="12" cy="5" r="1.200" fill={BLUE} />
          <circle cx="11" cy="9" r="1.600" fill={ORANGE} />
          <circle cx="8" cy="12" r="1.500" fill="#ea5a34" />
          <circle cx="4.500" cy="12.500" r="1.300" fill="#d4145a" />
        </Svg>
      </Tool>
      <Caret label="Theme menu" />
      <Separator />
      <Tool label="Refresh image">
        <Svg>
          <circle cx="8" cy="8" r="5" stroke={BLUE} strokeWidth="4" />
          <path d="M8 5L14 3M11 7l2 7M9.500 11L5 15M6 10.500L1 10M5 7l-1-6M7 5l4-4" stroke="#fafbff" strokeWidth="1.200" />
        </Svg>
      </Tool>
      <Caret label="Refresh menu" />
      <Tool label="Image snapshot">
        <Svg>
          <path d="M0 4h4l1-2h6l1 2h4v10H0z" fill={BLUE} />
          <circle cx="8.500" cy="8.500" r="3.300" fill={BLUE} stroke="#fff" strokeWidth="1.300" />
          <path d="M1.500 5.500h2v1h-2z" fill="#fff" />
        </Svg>
      </Tool>
      <Tool label="Print">
        <Svg>
          <rect x="1" y="5.500" width="14" height="7" rx="1.500" fill="#bcd3ea" stroke="#8fb0d3" />
          <path d="M3.500.5h9v5h-9z" fill="#fff" stroke={BLUE} />
          <path d="M3.500 10.500h9v5h-9z" fill="#fff" stroke={BLUE} />
        </Svg>
      </Tool>
    </div>
  );
}

const xTicks = [-15, -10, -5, 0, 5, 10, 15, 20];
const yTicks = [20, 15, 10, 5, 0, -5, -10, -15];

// data units to canvas pixels
const px = (v: number) => Math.round(391.800 + v * 18.960);
const py = (v: number) => Math.round(436 - v * 18.950);

function Plot() {
  return (
    <svg className="min-h-0 w-full flex-1 bg-white" fontFamily="DejaVu Sans, sans-serif" fontSize="12" role="img" aria-label="Geometry plot">
      <rect x="131" y="417" width="569" height="363" fill="#c8c8c8" />
      <path d="M131 780V417.500H700V780" fill="none" stroke="#333" />
      <path d="M131 455h569" stroke="#222" strokeWidth="1.500" />
      <path d="M392 417.500h47" stroke="#00f" />
      <g stroke="#808080" strokeWidth="2">
        <path d="M51 7v773" />
        <line x1="50" y1="8" x2="100%" y2="8" />
        <line x1="50" y1="780" x2="100%" y2="780" />
        {xTicks.map((t) => (
          <path key={t} d={`M${px(t)} 0v8M${px(t)} 780v8`} />
        ))}
        {yTicks.map((t) => (
          <path key={t} d={`M43 ${py(t)}h8`} />
        ))}
      </g>
      {xTicks.map((t) => (
        <text key={t} x={px(t)} y="798">
          {t}
        </text>
      ))}
      {yTicks.map((t) => (
        <text key={t} x="42" y={py(t) + 10} textAnchor="end">
          {t}
        </text>
      ))}
      <text x="55" y="26">
        ×10
        <tspan dy="-5" fontSize="10">
          -6
        </tspan>
      </text>
      <text x="55" y="42">
        m
      </text>
      <path d="M279 781l-6 6h12zM52 311l-5-6v12z" fill="#000" />
    </svg>
  );
}

function Graphics() {
  return (
    <main className="flex min-w-0 flex-1 flex-col border border-r-0 border-[#99cbf8]">
      <div role="tablist" className="flex h-[31px] shrink-0 gap-2 border-b border-[#d2d4d9] pt-[5px] pl-1 text-sm whitespace-nowrap">
        <Tab name="Graphics" active accent="text-[#1a8ce8]" />
        <Tab name="Function Plot" closable />
        <Tab name="Convergence Plot 1" closable />
      </div>
      <GraphicsToolbar />
      <Plot />
    </main>
  );
}

export default function App() {
  return (
    <div className="flex h-screen gap-[5px] overflow-hidden bg-[#fafbff] font-['Open_Sans','Noto_Sans',sans-serif] text-[13px] leading-5 text-[#111]">
      <ModelBuilder />
      <Settings />
      <Graphics />
    </div>
  );
}
